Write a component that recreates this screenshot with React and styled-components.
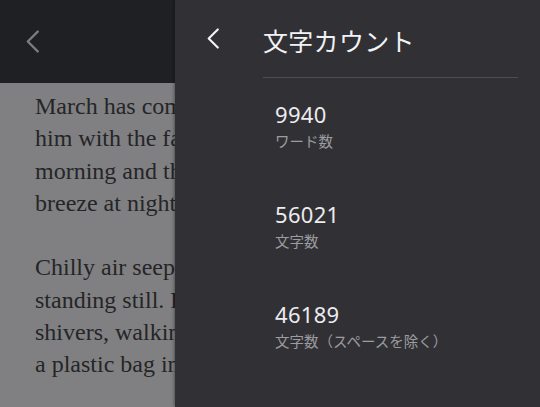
import React from "react";
import styled, { createGlobalStyle } from "styled-components";

const Global = createGlobalStyle`
  html, body { margin: 0; padding: 0; background: #808082; }
  body { width: 540px; height: 407px; overflow: hidden; }
`;

const Screen = styled.div`
  position: relative;
  width: 540px;
  height: 407px;
  overflow: hidden;
`;

const ReaderHeader = styled.header`
  height: 83px;
  background: #1f2023;
  display: flex;
  align-items: center;
  padding-left: 25px;
  box-sizing: border-box;
`;

const ReaderBody = styled.div`
  background: #808082;
  height: 324px;
  padding: 7px 0 0 35px;
  box-sizing: border-box;
  font-family: "Liberation Serif", serif;
  font-size: 24px;
  line-height: 32.3px;
  color: #252527;
`;

const Paragraph = styled.p`
  margin: 0 0 32.3px 0;
  white-space: nowrap;
  font-family: "Liberation Serif", serif;
`;

const Line = styled.span`
  display: block;
`;

const Panel = styled.aside`
  position: absolute;
  top: 0;
  left: 175px;
  right: 0;
  bottom: 0;
  background: #313135;
  box-shadow: -1px 0 3px rgba(0, 0, 0, 0.35);
  display: flex;
  flex-direction: column;
`;

const PanelHeader = styled.div`
  height: 77px;
  display: flex;
  align-items: center;
  padding-left: 30px;
  box-sizing: border-box;
`;

const BackButton = styled.button`
  background: none;
  border: none;
  padding: 0;
  margin: 0;
  width: 16px;
  height: 24px;
  display: flex;
  align-items: center;
  justify-content: center;
  cursor: pointer;
`;

const Title = styled.h1`
  margin: 0 0 0 42px;
  font-family: "Noto Sans CJK JP", "Noto Sans", sans-serif;
  font-weight: 400;
  font-size: 25px;
  line-height: 36px;
  color: #f2f2f4;
  letter-spacing: 0.3px;
  position: relative;
  top: 1px;
`;

const Divider = styled.hr`
  margin: 0 22px 0 88px;
  border: none;
  height: 1px;
  background: #4c4c51;
`;

const Stats = styled.div`
  padding: 19.5px 0 0 100px;
  display: flex;
  flex-direction: column;
`;

const Stat = styled.div`
  height: 100px;
`;

const Value = styled.div`
  font-family: "Noto Sans", "Roboto", sans-serif;
  font-size: 22px;
  line-height: 32px;
  color: #ececee;
  letter-spacing: 0.3px;
`;

const Label = styled.div`
  margin-top: -1px;
  font-family: "Noto Sans CJK JP", "Noto Sans", sans-serif;
  font-size: 14.5px;
  line-height: 24px;
  color: #9b9ba0;
`;

const Chevron = ({ color, w = 14, h = 22 }) => (
  <svg width={w} height={h} viewBox="0 0 14 22" fill="none">
    <polyline
      points="12,1.5 2.5,11 12,20.5"
      stroke={color}
      strokeWidth="2.2"
      strokeLinecap="round"
      strokeLinejoin="round"
    />
  </svg>
);

const stats = [
  { value: "9940", label: "ワード数" },
  { value: "56021", label: "文字数" },
  { value: "46189", label: "文字数（スペースを除く）" },
];

export default function App() {
  return (
    <>
      <Global />
      <Screen>
        <ReaderHeader>
          <Chevron color="#7c7c80" w={15} h={23} />
        </ReaderHeader>
        <ReaderBody>
          <Paragraph>
            <Line>March has come, but winter still greets</Line>
            <Line>him with the faint chill of frost in the</Line>
            <Line>morning and the sharp bite of the</Line>
            <Line>breeze at night.</Line>
          </Paragraph>
          <Paragraph>
            <Line>Chilly air seeps through his coat as he is</Line>
            <Line>standing still. He rubs his hands and</Line>
            <Line>shivers, walking on with</Line>
            <Line>a plastic bag in his hand.</Line>
          </Paragraph>
        </ReaderBody>
        <Panel>
          <PanelHeader>
            <BackButton aria-label="戻る">
              <Chevron color="#f4f4f6" w={14} h={21} />
            </BackButton>
            <Title>文字カウント</Title>
          </PanelHeader>
          <Divider />
          <Stats>
            {stats.map((s) => (
              <Stat key={s.label}>
                <Value>{s.value}</Value>
                <Label>{s.label}</Label>
              </Stat>
            ))}
          </Stats>
        </Panel>
      </Screen>
    </>
  );
}
